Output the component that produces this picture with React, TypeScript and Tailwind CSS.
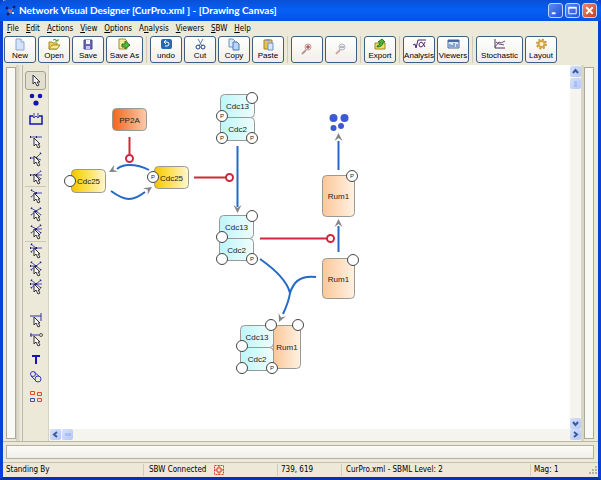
import React from 'react'
import clsx from 'clsx'

const App = () => {
	return (
		<div className="flex min-h-screen flex-col border-x-[3px] border-b-[3px] border-[#0a3fd6] border-b-[#0c2fae] bg-[#ece9d8] font-['Liberation_Sans',sans-serif] text-[8px] text-black">
			<TitleBar />
			<MenuBar />
			<Toolbar />
			<Workspace />
			<MessagePanel />
			<StatusBar />
		</div>
	)
}

const TitleBar = () => {
	return (
		<header className="-mx-[3px] flex h-[21px] items-center gap-[3px] rounded-t-md bg-linear-to-b from-[#0a50d8] via-[#0560f6] to-[#0552e4] pr-1 pl-[5px]">
			<svg width="11" height="11" viewBox="0 0 11 11">
				<path d="M2 3L5 7L9 2M5 7L3 9M5 7L8 8" stroke="#7d8fd0" fill="none" />
				<g fill="#1a1a5e">
					<circle cx="2" cy="3" r="1.5" />
					<circle cx="9" cy="2" r="1.5" />
					<circle cx="3" cy="9" r="1.5" />
				</g>
				<circle cx="5" cy="6" r="1.5" fill="#d4556c" />
				<circle cx="8" cy="8" r="1" fill="#fff" />
			</svg>
			<h1 className="flex-1 font-['Lato',sans-serif] text-[10px] font-bold whitespace-nowrap text-white">
				Network Visual Designer [CurPro.xml ] - [Drawing Canvas]
			</h1>
			<div className="flex gap-[2px]">
				<WindowButton label="Minimize">
					<path d="M3 10H7" strokeWidth="2" />
				</WindowButton>
				<WindowButton label="Maximize">
					<path d="M3 4V10.5H11V4" />
					<path d="M2.5 4H11.5" strokeWidth="2" />
				</WindowButton>
				<WindowButton label="Close" danger>
					<path d="M3.5 3.5L10.5 10.5M10.5 3.5L3.5 10.5" strokeWidth="2" />
				</WindowButton>
			</div>
		</header>
	)
}

type WindowButtonProps = {
	label: string
	danger?: boolean
	children: React.ReactNode
}

const WindowButton = ({ label, danger, children }: WindowButtonProps) => {
	return (
		<button
			aria-label={label}
			className={clsx(
				'rounded-[3px] border border-[#c3d3fb] bg-linear-to-br',
				danger ? 'from-[#ec8468] to-[#c93a1a]' : 'from-[#5b8bf5] to-[#1d50d8]'
			)}
		>
			<svg
				width="13"
				height="13"
				viewBox="0 0 14 14"
				fill="none"
				stroke="#fff"
				className="block"
			>
				{children}
			</svg>
		</button>
	)
}

const MENUS = [
	'File',
	'Edit',
	'Actions',
	'View',
	'Options',
	'Analysis',
	'Viewers',
	'SBW',
	'Help',
]

const MenuBar = () => {
	return (
		<nav className="flex h-[15px] items-center gap-[7px] bg-[#ece9d8] px-1">
			{MENUS.map((menu) => (
				<button key={menu} className="font-['DejaVu_Sans_Condensed','DejaVu_Sans',sans-serif]">
					{menu === 'Analysis' ? (
						<>
							A<u>n</u>alysis
						</>
					) : (
						<>
							<u>{menu[0]}</u>
							{menu.slice(1)}
						</>
					)}
				</button>
			))}
		</nav>
	)
}

const Toolbar = () => {
	return (
		<div className="flex h-[29px] items-start bg-[#ece9d8] pl-px">
			<ToolGroup>
				<ToolButton label="New">
					<path d="M2 1H7L10 4V12H2Z" fill="#d3e4fa" stroke="#8ba7d0" />
					<path d="M7 1V4H10" fill="#fff" stroke="#8ba7d0" />
				</ToolButton>
				<ToolButton label="Open">
					<path d="M1 11V4H4L5 5H9V11Z" fill="#f0d45c" stroke="#a58a20" />
					<path d="M1 11L4 7H12L9 11Z" fill="#fbec8e" stroke="#a58a20" />
					<path d="M5 2Q8 0 9 3M7 3H10V1" fill="none" stroke="#4a9b35" />
				</ToolButton>
				<ToolButton label="Save">
					<path d="M2 2H10V11H2Z" fill="#6a66ae" stroke="#4b4791" />
					<path d="M4 2H8V6H4Z" fill="#f2f2fc" />
					<path d="M4 8H8V11H4Z" fill="#c9c8e8" />
				</ToolButton>
				<ToolButton label="Save As" wide>
					<path d="M1 1H7L9 3V11H1Z" fill="#f4ea9a" stroke="#a0903a" />
					<path d="M4 6H7V3L12 7L7 11V9H4Z" fill="#52b93c" stroke="#267a1c" />
				</ToolButton>
			</ToolGroup>
			<ToolGroup>
				<ToolButton label="undo">
					<rect x="1" y="1" width="11" height="10" rx="2" fill="#2469b4" />
					<path d="M4 4H7Q9 4 9 6T7 8H5M6 2L4 4L6 6" fill="none" stroke="#fff" />
				</ToolButton>
				<ToolButton label="Cut">
					<path d="M4 1L8 8M9 1L5 8" stroke="#5f7fae" fill="none" />
					<circle cx="4" cy="9" r="2" stroke="#1d3f8c" fill="none" />
					<circle cx="9" cy="9" r="2" stroke="#1d3f8c" fill="none" />
				</ToolButton>
				<ToolButton label="Copy">
					<path d="M1 1H5L7 3V9H1Z" fill="#dbe9fb" stroke="#6c92c8" />
					<path d="M5 4H9L11 6V12H5Z" fill="#b9d4f6" stroke="#4f78b8" />
				</ToolButton>
				<ToolButton label="Paste">
					<path d="M2 2H10V11H2Z" fill="#e8c256" stroke="#a58330" />
					<path d="M4 1H8V3H4Z" fill="#8c9cb8" />
					<path d="M6 5H11V12H6Z" fill="#d8e7fa" stroke="#6f93c6" />
				</ToolButton>
			</ToolGroup>
			<ToolGroup>
				<ToolButton title="Zoom in">
					<path d="M5 7L1 11" stroke="#b99a92" strokeWidth="2" />
					<circle cx="7" cy="4" r="3" fill="#f6e6e6" stroke="#c59b9b" />
					<path d="M5 4H9M7 2V6" stroke="#a03333" />
				</ToolButton>
				<ToolButton title="Zoom out">
					<path d="M5 7L1 11" stroke="#c9a9a0" strokeWidth="2" />
					<circle cx="7" cy="4" r="3" fill="#eef0f5" stroke="#b4b4bd" />
					<path d="M5 4H9" stroke="#777f94" />
				</ToolButton>
			</ToolGroup>
			<ToolGroup>
				<ToolButton label="Export">
					<path d="M1 5H11V11H1Z" fill="#f1dd62" stroke="#a08c28" />
					<path d="M3 8Q6 8 6 4H4L8 1L11 4H9Q9 9 3 9Z" fill="#4fb33e" stroke="#2c8222" />
				</ToolButton>
			</ToolGroup>
			<ToolGroup>
				<ToolButton label="Analysis">
					<path d="M0 7L2 6L3 10L5 2H13" fill="none" stroke="#4b2366" />
					<path
						d="M12 4Q10 9 8 9Q6 9 6 7T8 4Q10 4 12 9"
						fill="none"
						stroke="#4b2366"
					/>
				</ToolButton>
				<ToolButton label="Viewers">
					<path d="M1 2H12V10H1Z" fill="#dbe8f8" stroke="#46689c" />
					<path d="M1 3H12" stroke="#46689c" strokeWidth="2" />
					<path d="M3 9V6M5 9V7M7 9V5M10 9V6" stroke="#315ca8" />
				</ToolButton>
			</ToolGroup>
			<ToolGroup last>
				<ToolButton label="Stochastic" wider>
					<path d="M2 1V10H12" fill="none" stroke="#43355c" />
					<path d="M2 9L6 4L8 5L12 3M3 4L6 6L11 7" fill="none" stroke="#74457f" />
				</ToolButton>
				<ToolButton label="Layout">
					<circle
						cx="6.5"
						cy="6"
						r="4.5"
						fill="none"
						stroke="#c89a3c"
						strokeWidth="2"
						strokeDasharray="2 1.5"
					/>
					<circle cx="6.5" cy="6" r="3" fill="#fff3c9" stroke="#d4a548" strokeWidth="2" />
				</ToolButton>
			</ToolGroup>
		</div>
	)
}

type ToolGroupProps = { last?: boolean; children: React.ReactNode }

const ToolGroup = ({ last, children }: ToolGroupProps) => {
	return (
		<div
			className={clsx(
				'flex gap-[2px]',
				!last && 'mr-[3px] border-r border-[#cfccbb] pr-[3px]'
			)}
		>
			{children}
		</div>
	)
}

type ToolButtonProps = {
	label?: string
	title?: string
	wide?: boolean
	wider?: boolean
	children: React.ReactNode
}

const ToolButton = ({ label, title, wide, wider, children }: ToolButtonProps) => {
	return (
		<button
			title={title}
			className={clsx(
				'flex h-[27px] flex-col items-center justify-center rounded-[3px] border border-[#3f5f80] bg-linear-to-b from-white to-[#f0efe8]',
				wide ? 'w-[37px]' : wider ? 'w-[47px]' : 'w-8'
			)}
		>
			<svg width="13" height="13" viewBox="0 0 13 13" className="shrink-0">
				{children}
			</svg>
			{label && <span className="leading-[10px] whitespace-nowrap">{label}</span>}
		</button>
	)
}

const Workspace = () => {
	return (
		<main className="flex flex-1 bg-[#ece9d8] pr-1 pl-[3px]">
			<div className="my-[2px] w-[10px] border border-[#aca899] bg-[#f8f8f5]" />
			<Splitter />
			<Palette />
			<div className="flex min-w-0 flex-1 flex-col">
				<div className="flex flex-1">
					<div className="min-w-0 flex-1 overflow-hidden bg-white">
						<NetworkDiagram />
					</div>
					<div className="flex w-[11px] flex-col gap-px bg-[#f5f4ee] pt-px">
						<ScrollButton label="Scroll up" d="M3 7L5.5 4L8 7" />
						<ScrollButton label="Vertical thumb" d="M4 4H7M4 6H7M4 8H7" thumb />
						<div className="flex-1" />
						<ScrollButton label="Scroll down" d="M3 4L5.5 7L8 4" />
					</div>
				</div>
				<div className="flex h-3 items-start gap-px bg-[#f5f4ee] pl-px">
					<ScrollButton label="Scroll left" d="M7 3L4 5.5L7 8" />
					<ScrollButton label="Horizontal thumb" d="M4 4V7M6 4V7M8 4V7" thumb />
					<div className="flex-1" />
					<ScrollButton label="Scroll right" d="M4 3L7 5.5L4 8" />
				</div>
			</div>
			<div className="w-[3px] bg-[#d9d6c6]" />
			<div className="my-[2px] w-[10px] border border-[#aca899] bg-[#f8f8f5]" />
		</main>
	)
}

const Splitter = () => (
	<div className="w-[7px] border-r border-[#bab7a8] bg-linear-to-r from-[#d0cdbd] to-[#f1efe4]" />
)

type ScrollButtonProps = { label: string; d: string; thumb?: boolean }

const ScrollButton = ({ label, d, thumb }: ScrollButtonProps) => {
	return (
		<button
			aria-label={label}
			className="size-[11px] shrink-0 rounded-[2px] bg-linear-to-br from-[#d5e1fd] to-[#b4c8f6]"
		>
			<svg
				width="11"
				height="11"
				viewBox="0 0 11 11"
				fill="none"
				stroke={thumb ? '#8ea9ea' : '#3d5a98'}
				strokeWidth={thumb ? 1 : 2}
			>
				<path d={d} />
			</svg>
		</button>
	)
}

const Palette = () => {
	return (
		<div className="flex w-[26px] flex-col items-center border-r border-[#d5d2c2] bg-[#ece9d8] pt-[6px]">
			<PaletteButton label="Select" active>
				<Cursor x={6} y={3} />
			</PaletteButton>
			<PaletteButton label="Species">
				<g fill="#1414b4">
					<circle cx="5" cy="5" r="2.3" />
					<circle cx="13" cy="5" r="2.3" />
					<circle cx="9" cy="12" r="2.6" />
				</g>
			</PaletteButton>
			<PaletteButton label="Compartment">
				<path d="M6 6H3V14H15V6H12" fill="none" stroke="#1414b4" strokeWidth="1.5" />
				<path
					d="M7 3V8M11 3V8M5 5L7 8L9 6L11 8L13 5"
					fill="none"
					stroke="#4444a8"
				/>
			</PaletteButton>
			<div className="mt-1 flex flex-col">
				<Reaction label="Uni Uni" d="M3 5H15" />
				<Reaction label="Uni Bi" d="M3 8H9L14 3M9 8L14 10" />
				<Reaction label="Uni Ter" d="M3 7H15M9 7L14 3M9 7L14 11" />
			</div>
			<div className="flex flex-col border-y border-[#cbc8b8]">
				<Reaction label="Bi Uni" d="M4 3L9 6L4 10M9 6H15" />
				<Reaction label="Bi Bi" d="M4 3L9 6L4 10M14 3L9 6L14 10" />
				<Reaction label="Bi Ter" d="M4 3L9 6L4 10M9 6H15M14 2L9 6L14 10" />
			</div>
			<div className="mb-[14px] flex flex-col">
				<Reaction label="Ter Uni" d="M4 2L9 6L4 10M3 6H15" />
				<Reaction label="Ter Bi" d="M4 2L9 6L4 10M3 6H9M14 2L9 6L14 10" />
				<Reaction label="Ter Ter" d="M4 2L9 6L4 10M3 6H15M14 2L9 6L14 10" />
			</div>
			<PaletteButton label="Inhibitor">
				<path d="M3 5H14M14 2V10" fill="none" stroke="#3030b0" />
				<Cursor x={7} y={6} small />
			</PaletteButton>
			<PaletteButton label="Regulator">
				<path d="M3 5H12M4 3V7" fill="none" stroke="#3030b0" />
				<circle cx="14" cy="5" r="1.5" fill="none" stroke="#555" />
				<Cursor x={7} y={6} small />
			</PaletteButton>
			<PaletteButton label="Text">
				<path d="M5 7H13M9 7V15" fill="none" stroke="#1414b4" strokeWidth="2" />
			</PaletteButton>
			<PaletteButton label="Alias">
				<g fill="none" stroke="#3a3ac0">
					<circle cx="6" cy="6" r="2.5" />
					<circle cx="11" cy="11" r="3" />
					<path d="M7 4L12 8M4 8L9 13" />
				</g>
			</PaletteButton>
			<PaletteButton label="Align">
				<g fill="none">
					<path
						d="M3.5 4.5H7.5V7.5H3.5ZM10.5 5.5H14.5V8.5H10.5ZM10.5 11.5H14.5V14.5H10.5Z"
						stroke="#d8503c"
					/>
					<path d="M3.5 11.5H7.5V14.5H3.5Z" stroke="#4646b8" />
				</g>
			</PaletteButton>
		</div>
	)
}

type PaletteButtonProps = {
	label: string
	active?: boolean
	short?: boolean
	children: React.ReactNode
}

const PaletteButton = ({ label, active, short, children }: PaletteButtonProps) => {
	return (
		<button
			aria-label={label}
			className={clsx(
				'flex w-[21px] items-center justify-center rounded-[3px]',
				short ? 'h-[18px]' : 'h-[19px]',
				active && 'border border-[#a5a293] bg-[#e2dfd0]'
			)}
		>
			<svg width="18" height="18" viewBox="0 0 18 18" className="shrink-0">
				{children}
			</svg>
		</button>
	)
}

const Reaction = ({ label, d }: { label: string; d: string }) => {
	return (
		<PaletteButton label={label} short>
			<path d={d} fill="none" stroke="#4a4ab8" />
			<path
				d={d}
				fill="none"
				stroke="#20206e"
				strokeWidth="2"
				strokeDasharray="1 5"
			/>
			<Cursor x={7} y={6} small />
		</PaletteButton>
	)
}

const Cursor = ({ x, y, small }: { x: number; y: number; small?: boolean }) => {
	return (
		<path
			transform={`translate(${x} ${y})`}
			d={
				small
					? 'M0 0V8L2 6L4 10L6 9L4 6H6Z'
					: 'M0 0V9L2 7L4 11L6 10L4 7H7Z'
			}
			fill="#f6f6fa"
			stroke="#333"
			strokeWidth="1"
		/>
	)
}

const BLUE = '#2468c8'
const RED = '#d0283a'

// the viewBox starts at the canvas origin, so the nodes keep window coordinates
const NetworkDiagram = () => {
	return (
		<svg
			width="521"
			height="364"
			viewBox="49 65 521 364"
			fontSize="8"
			textAnchor="middle"
			className="block max-w-none"
		>
			<defs>
				<linearGradient id="cyan">
					<stop offset="0" stopColor="#bdf6f9" />
					<stop offset="1" stopColor="#f0fdfd" />
				</linearGradient>
				<linearGradient id="peach">
					<stop offset="0" stopColor="#fcc797" />
					<stop offset="1" stopColor="#fff1e4" />
				</linearGradient>
				<linearGradient id="orange">
					<stop offset="0" stopColor="#f4641c" />
					<stop offset="1" stopColor="#fccbae" />
				</linearGradient>
				<linearGradient id="yellow">
					<stop offset="0" stopColor="#f3c400" />
					<stop offset="0.3" stopColor="#fbd930" />
					<stop offset="1" stopColor="#fff7d0" />
				</linearGradient>
			</defs>

			<g fill="none" stroke={BLUE} strokeWidth="2">
				<path d="M149 170Q140 165 129 165Q122 165 117 169" />
				<path d="M111 191Q122 199 129 199Q136 199 145 192" />
				<path d="M237.5 146V207" />
				<path d="M338.5 141V170" />
				<path d="M338.5 226V252" />
				<path d="M260 259Q286 277 290 293" />
				<path d="M316 277C298 275 293 284 290 293Q289 301 283 314" />
			</g>
			<g fill="none" stroke={RED} strokeWidth="2">
				<path d="M129.5 137V155" />
				<path d="M194 177.5H226" />
				<path d="M260 238.5H327" />
				<g fill="#fff">
					<circle cx="129.5" cy="158.5" r="3.5" />
					<circle cx="229.5" cy="177.5" r="3.5" />
					<circle cx="330.5" cy="238.5" r="3.5" />
				</g>
			</g>
			<ArrowHead x={109} y={172} angle={62} />
			<ArrowHead x={152} y={187} angle={236} />
			<ArrowHead x={237.5} y={213} angle={0} />
			<ArrowHead x={338.5} y={133} angle={180} />
			<ArrowHead x={338.5} y={219} angle={180} />
			<ArrowHead x={279} y={322} angle={24} />

			<g fill="#3c5ad4">
				<circle cx="333.5" cy="118" r="4" />
				<circle cx="344.5" cy="118" r="4" />
				<circle cx="341" cy="126" r="3" />
				<circle cx="333.5" cy="128" r="3" />
			</g>

			<Species x={112.5} y={108.5} w={34} h={22} fill="url(#orange)" name="PP2A" />
			<Species x={71.5} y={169.5} w={34} h={23} fill="url(#yellow)" name="Cdc25" />
			<Species x={154.5} y={166.5} w={34} h={22} fill="url(#yellow)" name="Cdc25" />
			<Site x={70} y={181} />
			<Site x={153} y={177} p />

			<Species x={220.5} y={94.5} w={34} h={23} fill="url(#cyan)" name="Cdc13" />
			<Species x={220.5} y={117.5} w={34} h={23} fill="url(#cyan)" name="Cdc2" />
			<Site x={252} y={98} />
			<Site x={222} y={116} p />
			<Site x={222} y={138} p />
			<Site x={252} y={138} p />

			<Species x={219.5} y={215.5} w={34} h={23} fill="url(#cyan)" name="Cdc13" />
			<Species x={219.5} y={238.5} w={34} h={22} fill="url(#cyan)" name="Cdc2" />
			<Site x={252} y={216} />
			<Site x={222} y={237} />
			<Site x={222} y={259} />
			<Site x={252} y={259} p />

			<Species x={322.5} y={175.5} w={32} h={41} fill="url(#peach)" name="Rum1" />
			<Site x={352} y={176} p />
			<Species x={322.5} y={258.5} w={32} h={40} fill="url(#peach)" name="Rum1" />
			<Site x={353} y={260} />

			<Species x={240.5} y={325.5} w={33} h={22} fill="url(#cyan)" name="Cdc13" />
			<Species x={240.5} y={347.5} w={33} h={23} fill="url(#cyan)" name="Cdc2" />
			<Species x={273.5} y={325.5} w={27} h={43} fill="url(#peach)" name="Rum1" />
			<Site x={271} y={325} />
			<Site x={298} y={325} />
			<Site x={242} y={346} />
			<Site x={242} y={368} />
			<Site x={272} y={368} p />
		</svg>
	)
}

type SpeciesProps = {
	x: number
	y: number
	w: number
	h: number
	fill: string
	name: string
}

const Species = ({ x, y, w, h, fill, name }: SpeciesProps) => (
	<g>
		<rect x={x} y={y} width={w} height={h} rx="4" fill={fill} stroke="#9a9a94" />
		<text x={x + w / 2} y={y + h / 2 + 3} fill="#222">
			{name}
		</text>
	</g>
)

// binding site, phosphorylated when p is set
const Site = ({ x, y, p }: { x: number; y: number; p?: boolean }) => (
	<g>
		<circle cx={x} cy={y} r="5.5" fill="#fff" stroke="#444" />
		{p && (
			<text x={x} y={y + 2} fontSize="6" fill="#222">
				P
			</text>
		)}
	</g>
)

const ArrowHead = ({ x, y, angle }: { x: number; y: number; angle: number }) => (
	<path
		transform={`translate(${x} ${y}) rotate(${angle})`}
		d="M0 0L-4 -8L0 -5L4 -8Z"
		fill="#858585"
	/>
)

const MessagePanel = () => {
	return (
		<div className="border-t border-[#bab7a8] bg-[#ece9d8] pt-[3px] pr-1 pb-[3px] pl-[3px]">
			<div className="h-[14px] border border-[#b3b0a2] bg-linear-to-b from-[#fbfbf9] to-[#f0efea]" />
		</div>
	)
}

const StatusBar = () => {
	return (
		<footer className="grid h-[15px] grid-cols-[140px_134px_64px_1fr_68px] items-center border-t border-[#c5c2b2] bg-[#ece9d8] font-['DejaVu_Sans_Condensed','DejaVu_Sans',sans-serif] whitespace-nowrap">
			<span className="pl-[3px]">Standing By</span>
			<span className="flex items-center gap-2 border-l border-[#cfccbb] pl-[5px]">
				SBW Connected
				<svg width="10" height="10" viewBox="0 0 10 10" fill="none" stroke="#e0402e">
					<path d="M0.5 0.5H9.5V9.5H0.5Z" strokeDasharray="2 1" />
					<path d="M3 3H7V7H3ZM5 0V3M5 7V10M0 5H3M7 5H10" />
				</svg>
			</span>
			<span className="border-l border-[#cfccbb] pl-[3px]">739, 619</span>
			<span className="border-l border-[#cfccbb] pl-1">CurPro.xml - SBML Level: 2</span>
			<span className="flex items-center justify-between border-l border-[#cfccbb] pl-[3px]">
				Mag: 1
				<svg width="10" height="10" viewBox="0 0 10 10" fill="#b5b2a0">
					<path d="M7 1H9V3H7ZM7 4H9V6H7ZM4 4H6V6H4ZM7 7H9V9H7ZM4 7H6V9H4ZM1 7H3V9H1Z" />
				</svg>
			</span>
		</footer>
	)
}

export default App
